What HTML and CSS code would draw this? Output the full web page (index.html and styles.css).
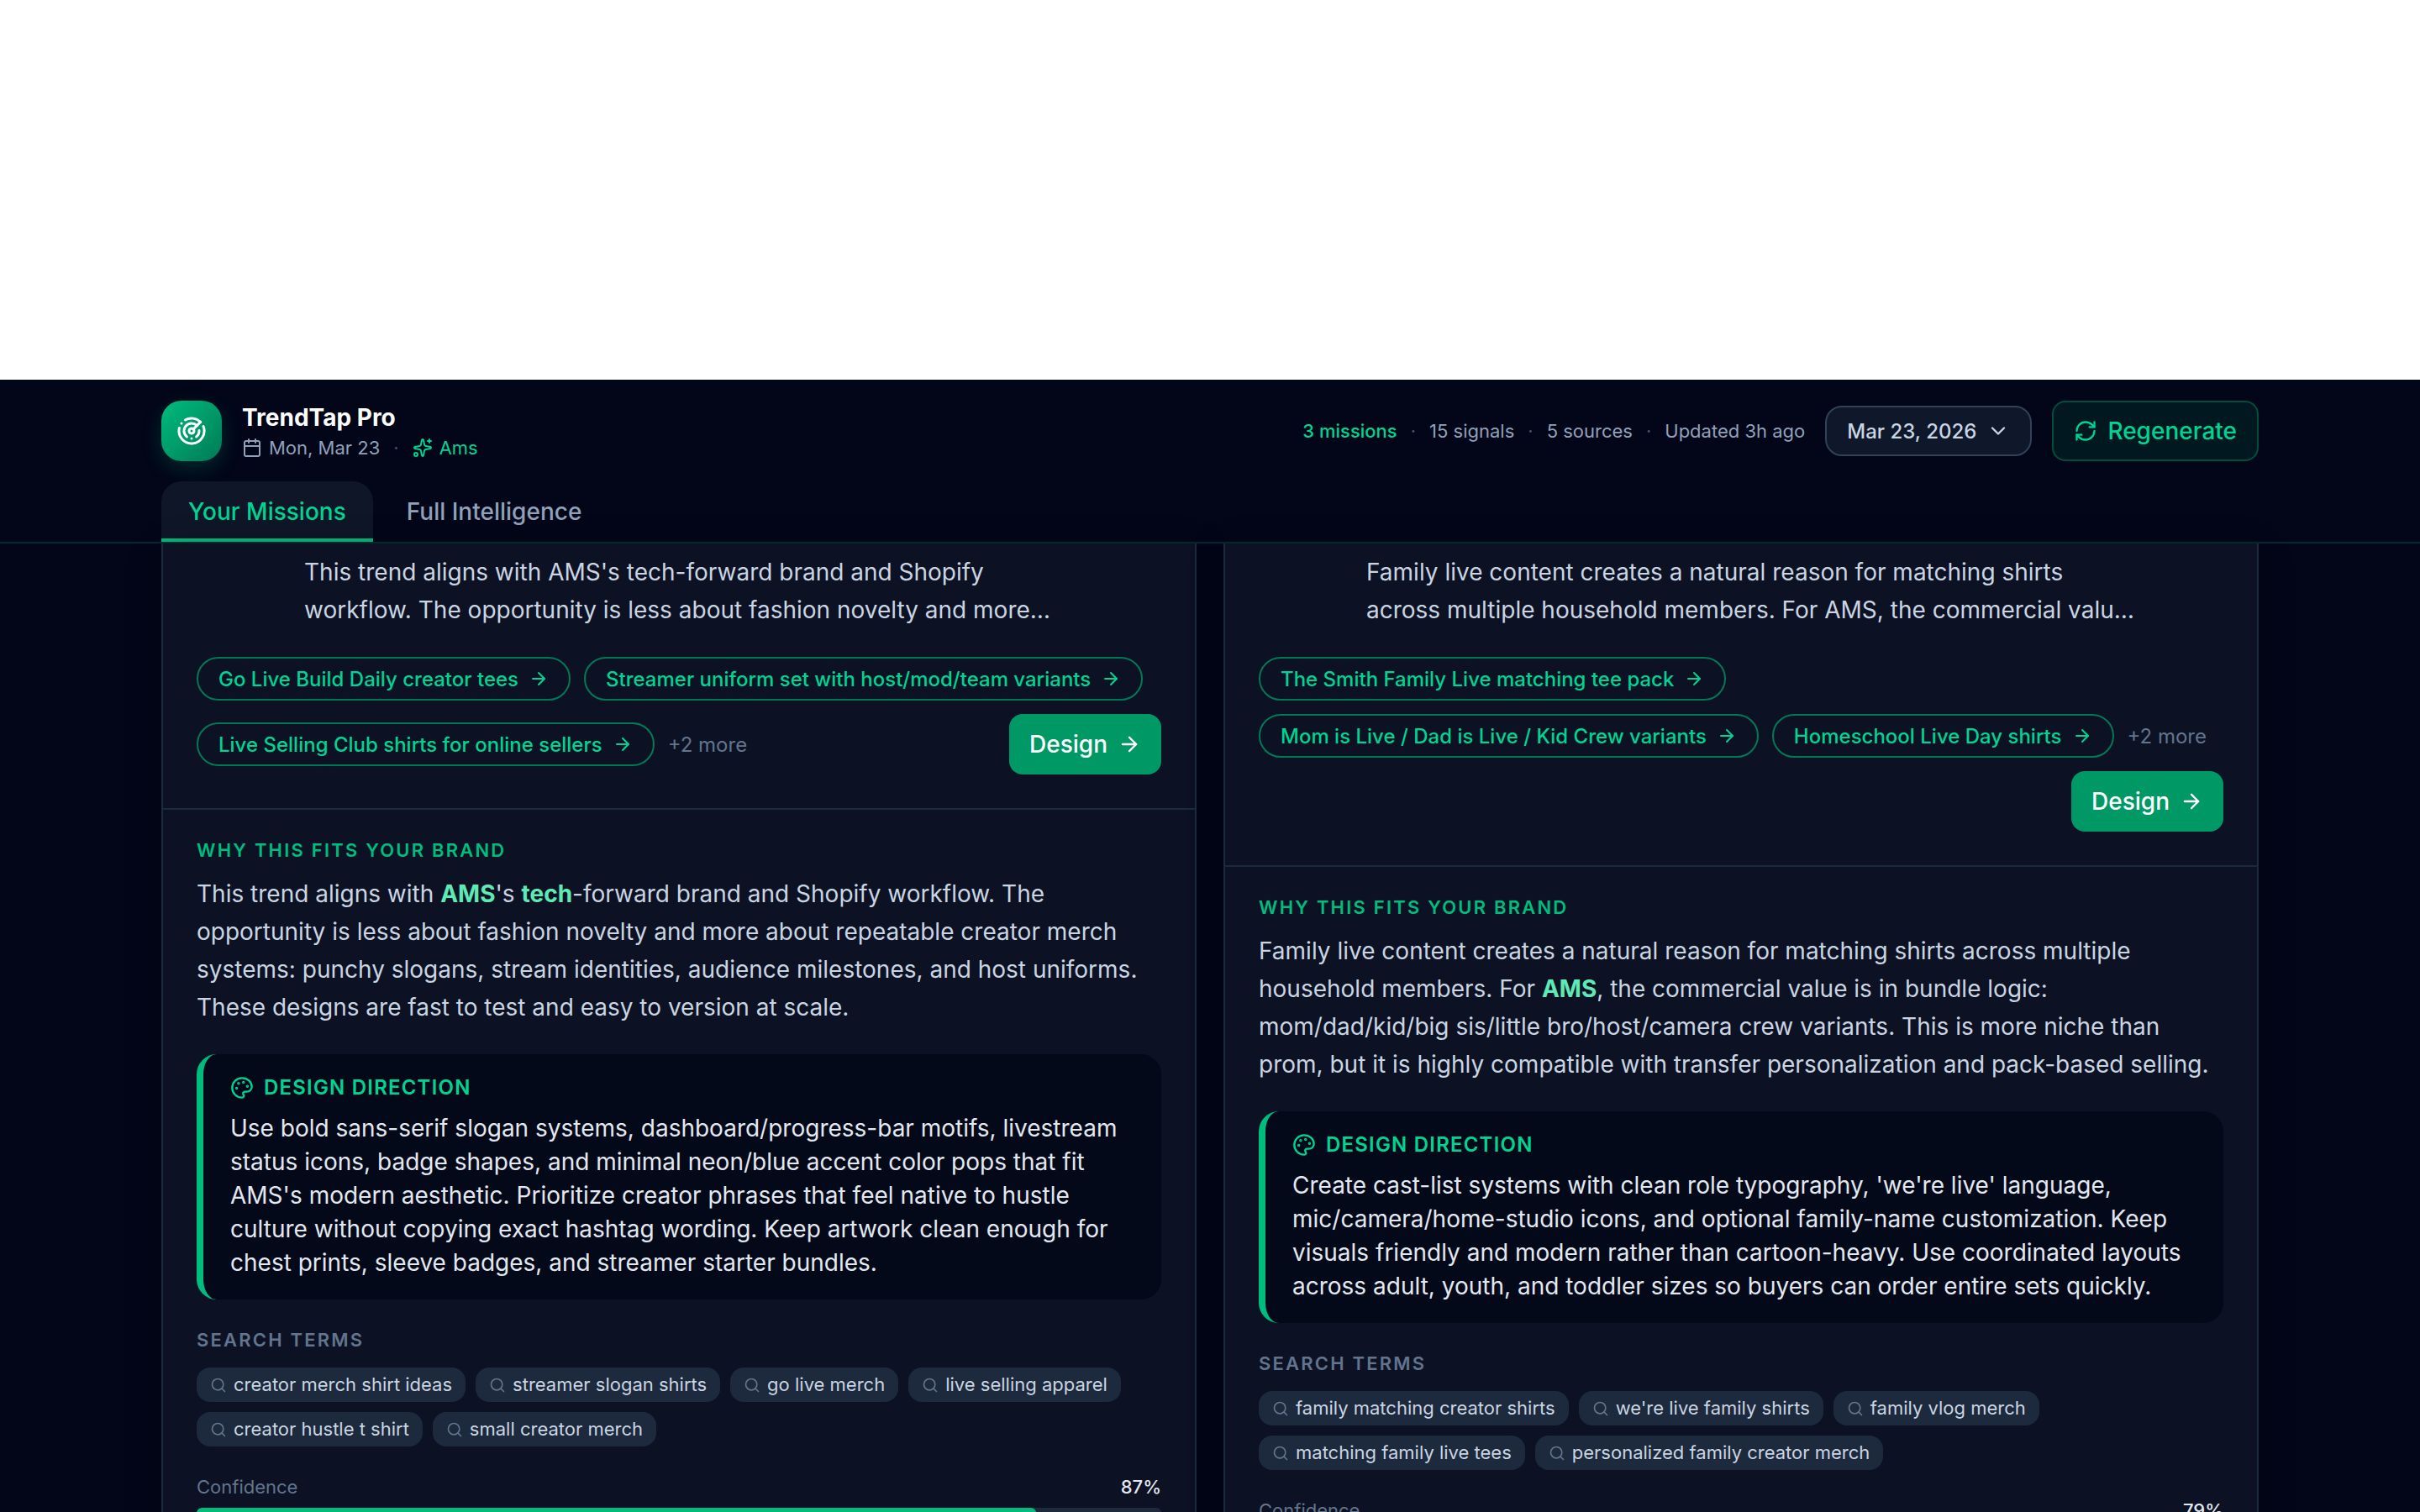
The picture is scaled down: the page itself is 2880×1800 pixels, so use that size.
FILE: index.html
```html
<!DOCTYPE html>
<html lang="en">
<head>
    <meta charset="UTF-8">
    <meta name="viewport" content="width=device-width, initial-scale=1.0">
    <title>TrendTap Pro</title>
    <link rel="stylesheet" href="styles.css">
</head>
<body>
    <svg class="sprite" aria-hidden="true">
        <symbol id="radar" viewBox="0 0 24 24">
            <path d="M19.07 4.93A10 10 0 0 0 6.99 3.34"/>
            <path d="M4 6h.01"/>
            <path d="M2.29 9.62A10 10 0 1 0 21.31 8.35"/>
            <path d="M16.24 7.76A6 6 0 1 0 8.23 16.67"/>
            <path d="M12 18h.01"/>
            <path d="M17.99 11.66A6 6 0 0 1 15.77 16.67"/>
            <circle cx="12" cy="12" r="2"/>
            <path d="m13.41 10.59 5.66-5.66"/>
        </symbol>
        <symbol id="calendar" viewBox="0 0 24 24">
            <path d="M8 2v4"/>
            <path d="M16 2v4"/>
            <rect width="18" height="18" x="3" y="4" rx="2"/>
            <path d="M3 10h18"/>
        </symbol>
        <symbol id="sparkles" viewBox="0 0 24 24">
            <path d="M11.017 2.814a1 1 0 0 1 1.966 0l1.051 5.558a2 2 0 0 0 1.594 1.594l5.558 1.051a1 1 0 0 1 0 1.966l-5.558 1.051a2 2 0 0 0-1.594 1.594l-1.051 5.558a1 1 0 0 1-1.966 0l-1.051-5.558a2 2 0 0 0-1.594-1.594l-5.558-1.051a1 1 0 0 1 0-1.966l5.558-1.051a2 2 0 0 0 1.594-1.594z"/>
            <path d="M20 2v4"/>
            <path d="M22 4h-4"/>
            <circle cx="4" cy="20" r="2"/>
        </symbol>
        <symbol id="chevron" viewBox="0 0 24 24">
            <path d="m6 9 6 6 6-6"/>
        </symbol>
        <symbol id="refresh" viewBox="0 0 24 24">
            <path d="M3 12a9 9 0 0 1 9-9 9.75 9.75 0 0 1 6.74 2.74L21 8"/>
            <path d="M21 3v5h-5"/>
            <path d="M21 12a9 9 0 0 1-9 9 9.75 9.75 0 0 1-6.74-2.74L3 16"/>
            <path d="M8 16H3v5"/>
        </symbol>
        <symbol id="arrow" viewBox="0 0 24 24">
            <path d="M5 12h14"/>
            <path d="m12 5 7 7-7 7"/>
        </symbol>
        <symbol id="palette" viewBox="0 0 24 24">
            <path d="M12 22a1 1 0 0 1 0-20 10 9 0 0 1 10 9 5 5 0 0 1-5 5h-2.25a1.75 1.75 0 0 0-1.4 2.8l.3.4a1.75 1.75 0 0 1-1.4 2.8z"/>
            <circle cx="13.5" cy="6.5" r=".5" fill="currentColor"/>
            <circle cx="17.5" cy="10.5" r=".5" fill="currentColor"/>
            <circle cx="6.5" cy="12.5" r=".5" fill="currentColor"/>
            <circle cx="8.5" cy="7.5" r=".5" fill="currentColor"/>
        </symbol>
        <symbol id="search" viewBox="0 0 24 24">
            <path d="m21 21-4.34-4.34"/>
            <circle cx="11" cy="11" r="8"/>
        </symbol>
    </svg>

    <div class="app">
        <header class="header">
            <div class="container">
                <div class="topbar">
                    <div class="logo"><svg class="icon icon-lg"><use href="#radar"/></svg></div>
                    <div class="brand">
                        <h1>TrendTap Pro</h1>
                        <div class="brand-meta">
                            <span class="meta-item"><svg class="icon"><use href="#calendar"/></svg>Mon, Mar 23</span>
                            <span class="dot">·</span>
                            <span class="meta-item accent"><svg class="icon"><use href="#sparkles"/></svg>Ams</span>
                        </div>
                    </div>
                    <div class="stats">
                        <span class="accent strong">3 missions</span>
                        <span class="dot">·</span>
                        <span>15 signals</span>
                        <span class="dot">·</span>
                        <span>5 sources</span>
                        <span class="dot">·</span>
                        <span>Updated 3h ago</span>
                    </div>
                    <button class="date-button" type="button">Mar 23, 2026 <svg class="icon icon-md"><use href="#chevron"/></svg></button>
                    <button class="regen-button" type="button"><svg class="icon icon-md"><use href="#refresh"/></svg> Regenerate</button>
                </div>
                <nav class="tabs">
                    <button class="tab active" type="button">Your Missions</button>
                    <button class="tab" type="button">Full Intelligence</button>
                </nav>
            </div>
        </header>

        <main class="container missions">
            <article class="card">
                <div class="card-top">
                    <p class="summary">This trend aligns with AMS's tech-forward brand and Shopify workflow. The opportunity is less about fashion novelty and more…</p>
                    <div class="ideas">
                        <button class="idea" type="button">Go Live Build Daily creator tees <svg class="icon"><use href="#arrow"/></svg></button>
                        <button class="idea" type="button">Streamer uniform set with host/mod/team variants <svg class="icon"><use href="#arrow"/></svg></button>
                        <button class="idea" type="button">Live Selling Club shirts for online sellers <svg class="icon"><use href="#arrow"/></svg></button>
                        <span class="more">+2 more</span>
                        <button class="design-button" type="button">Design <svg class="icon icon-md"><use href="#arrow"/></svg></button>
                    </div>
                </div>
                <div class="card-body">
                    <h2 class="label accent-dark">Why this fits your brand</h2>
                    <p class="reason">This trend aligns with <mark>AMS</mark>'s <mark>tech</mark>-forward brand and Shopify workflow. The opportunity is less about fashion novelty and more about repeatable creator merch systems: punchy slogans, stream identities, audience milestones, and host uniforms. These designs are fast to test and easy to version at scale.</p>
                    <section class="direction">
                        <h3><svg class="icon icon-md"><use href="#palette"/></svg>Design direction</h3>
                        <p>Use bold sans-serif slogan systems, dashboard/progress-bar motifs, livestream status icons, badge shapes, and minimal neon/blue accent color pops that fit AMS's modern aesthetic. Prioritize creator phrases that feel native to hustle culture without copying exact hashtag wording. Keep artwork clean enough for chest prints, sleeve badges, and streamer starter bundles.</p>
                    </section>
                    <h2 class="label">Search terms</h2>
                    <ul class="terms">
                        <li><svg class="icon icon-sm"><use href="#search"/></svg>creator merch shirt ideas</li>
                        <li><svg class="icon icon-sm"><use href="#search"/></svg>streamer slogan shirts</li>
                        <li><svg class="icon icon-sm"><use href="#search"/></svg>go live merch</li>
                        <li><svg class="icon icon-sm"><use href="#search"/></svg>live selling apparel</li>
                        <li><svg class="icon icon-sm"><use href="#search"/></svg>creator hustle t shirt</li>
                        <li><svg class="icon icon-sm"><use href="#search"/></svg>small creator merch</li>
                    </ul>
                    <div class="confidence">
                        <span>Confidence</span>
                        <span class="value">87%</span>
                    </div>
                    <div class="bar"><div class="bar-fill" style="width: 87%"></div></div>
                </div>
            </article>

            <article class="card">
                <div class="card-top">
                    <p class="summary">Family live content creates a natural reason for matching shirts across multiple household members. For AMS, the commercial valu…</p>
                    <div class="ideas">
                        <button class="idea" type="button">The Smith Family Live matching tee pack <svg class="icon"><use href="#arrow"/></svg></button>
                        <button class="idea" type="button">Mom is Live / Dad is Live / Kid Crew variants <svg class="icon"><use href="#arrow"/></svg></button>
                        <button class="idea" type="button">Homeschool Live Day shirts <svg class="icon"><use href="#arrow"/></svg></button>
                        <span class="more">+2 more</span>
                        <button class="design-button" type="button">Design <svg class="icon icon-md"><use href="#arrow"/></svg></button>
                    </div>
                </div>
                <div class="card-body">
                    <h2 class="label accent-dark">Why this fits your brand</h2>
                    <p class="reason">Family live content creates a natural reason for matching shirts across multiple household members. For <mark>AMS</mark>, the commercial value is in bundle logic: mom/dad/kid/big sis/little bro/host/camera crew variants. This is more niche than prom, but it is highly compatible with transfer personalization and pack-based selling.</p>
                    <section class="direction">
                        <h3><svg class="icon icon-md"><use href="#palette"/></svg>Design direction</h3>
                        <p>Create cast-list systems with clean role typography, 'we're live' language, mic/camera/home-studio icons, and optional family-name customization. Keep visuals friendly and modern rather than cartoon-heavy. Use coordinated layouts across adult, youth, and toddler sizes so buyers can order entire sets quickly.</p>
                    </section>
                    <h2 class="label">Search terms</h2>
                    <ul class="terms">
                        <li><svg class="icon icon-sm"><use href="#search"/></svg>family matching creator shirts</li>
                        <li><svg class="icon icon-sm"><use href="#search"/></svg>we're live family shirts</li>
                        <li><svg class="icon icon-sm"><use href="#search"/></svg>family vlog merch</li>
                        <li><svg class="icon icon-sm"><use href="#search"/></svg>matching family live tees</li>
                        <li><svg class="icon icon-sm"><use href="#search"/></svg>personalized family creator merch</li>
                    </ul>
                    <div class="confidence">
                        <span>Confidence</span>
                        <span class="value">79%</span>
                    </div>
                    <div class="bar"><div class="bar-fill" style="width: 79%"></div></div>
                </div>
            </article>
        </main>
    </div>
</body>
</html>
```
FILE: styles.css
```css
* {
    box-sizing: border-box;
}
body {
    margin: 0;
    height: 100vh;
    padding-top: 452px;
    overflow: hidden;
    background: #fff;
    font-family: 'Inter', sans-serif;
    font-size: 28px;
    color: #cad5e2;
    -webkit-font-smoothing: antialiased;
}
h1, h2, h3, p, ul {
    margin: 0;
    padding: 0;
}
button {
    display: inline-flex;
    align-items: center;
    border: none;
    background: none;
    font-family: inherit;
    font-weight: 500;
    cursor: pointer;
}
.sprite {
    display: none;
}
.icon {
    width: 24px;
    height: 24px;
    flex-shrink: 0;
    fill: none;
    stroke: currentColor;
    stroke-width: 2;
    stroke-linecap: round;
    stroke-linejoin: round;
}
.icon-sm {
    width: 20px;
    height: 20px;
}
.icon-md {
    width: 28px;
    height: 28px;
}
.icon-lg {
    width: 36px;
    height: 36px;
}
.accent {
    color: #00d492;
}
.strong {
    font-weight: 500;
}
.dot {
    color: #45556c;
}
.app {
    background: #020618;
}
.container {
    max-width: 2560px;
    margin: 0 auto;
    padding: 0 32px;
}

/* header */
.header {
    padding-top: 25px;
    border-bottom: 2px solid #022c2c;
    background: #020618;
}
.topbar {
    display: flex;
    align-items: center;
    gap: 24px;
}
.logo {
    display: flex;
    align-items: center;
    justify-content: center;
    width: 72px;
    height: 72px;
    border-radius: 24px;
    background: linear-gradient(135deg, #00bc7d, #007a55);
    box-shadow: 0 8px 24px rgba(0, 188, 125, 0.2);
    color: #fff;
}
.brand h1 {
    font-size: 28px;
    line-height: 40px;
    font-weight: 700;
    color: #fff;
}
.brand-meta {
    display: flex;
    align-items: center;
    gap: 16px;
    font-size: 22px;
    line-height: 32px;
    color: #90a1b9;
}
.meta-item {
    display: flex;
    align-items: center;
    gap: 8px;
}
.stats {
    display: flex;
    gap: 16px;
    margin-left: auto;
    font-size: 22px;
    line-height: 33px;
    color: #90a1b9;
}
.date-button {
    gap: 12px;
    height: 60px;
    padding: 0 24px;
    border: 2px solid #314158;
    border-radius: 20px;
    background: #0f172b;
    font-size: 24px;
    color: #cad5e2;
}
.regen-button {
    gap: 12px;
    height: 72px;
    padding: 0 24px;
    border: 2px solid #004f3b;
    border-radius: 16px;
    background: #021821;
    font-size: 28px;
    color: #00d492;
}
.tabs {
    display: flex;
    gap: 8px;
    margin-top: 24px;
}
.tab {
    height: 72px;
    padding: 4px 32px 0;
    border-bottom: 4px solid transparent;
    border-radius: 24px 24px 0 0;
    font-size: 28px;
    color: #90a1b9;
}
.tab.active {
    border-image: linear-gradient(#00bc7d, #00bc7d) 0 0 4;
    background: #0e1628;
    color: #00d492;
}

/* mission cards */
.missions {
    display: grid;
    grid-template-columns: 1fr 1fr;
    align-items: start;
    gap: 32px;
}
.card {
    border: 2px solid #1d293d;
    border-top: none;
    border-radius: 0 0 28px 28px;
    background: #0c1224;
    box-shadow: 0 8px 40px rgba(0, 0, 0, 0.3);
}
.card-top {
    padding: 12px 40px 40px;
}
.summary {
    margin-bottom: 33px;
    padding: 0 104px 0 128px;
    line-height: 45px;
}
.ideas {
    display: flex;
    flex-wrap: wrap;
    align-items: center;
    gap: 16px;
}
.idea {
    gap: 12px;
    height: 52px;
    padding: 0 24px;
    border: 2px solid #007a55;
    border-radius: 26px;
    font-size: 24px;
    color: #00d492;
}
.more {
    font-size: 24px;
    color: #62748e;
}
.design-button {
    gap: 12px;
    height: 72px;
    margin-left: auto;
    padding: 0 24px;
    border-radius: 16px;
    background: #009966;
    font-size: 28px;
    color: #fff;
}
.card-body {
    padding: 32px 40px 40px;
    border-top: 2px solid #1d293d;
}
.label {
    font-size: 22px;
    line-height: 33px;
    font-weight: 600;
    letter-spacing: 0.1em;
    text-transform: uppercase;
    color: #62748e;
}
.accent-dark {
    color: #00bc7d;
}
.reason {
    margin: 13px 0 33px;
    line-height: 45px;
}
mark {
    background: none;
    font-weight: 700;
    color: #5ee9b5;
}
.direction {
    margin-bottom: 32px;
    padding: 24px 32px;
    border-left: 8px solid #00bc7d;
    border-radius: 24px;
    background: #040919;
}
.direction h3 {
    display: flex;
    align-items: center;
    gap: 12px;
    margin-bottom: 12px;
    font-size: 24px;
    line-height: 32px;
    font-weight: 600;
    letter-spacing: 0.05em;
    text-transform: uppercase;
    color: #00d492;
}
.direction p {
    line-height: 40px;
    color: #e2e8f0;
}
.terms {
    display: flex;
    flex-wrap: wrap;
    gap: 12px;
    margin: 16px 0 32px;
    list-style: none;
}
.terms li {
    display: flex;
    align-items: center;
    gap: 8px;
    padding: 4px 16px;
    border-radius: 16px;
    background: #1d293d;
    font-size: 22px;
    line-height: 33px;
}
.terms .icon {
    color: #62748e;
}
.confidence {
    display: flex;
    justify-content: space-between;
    margin-bottom: 8px;
    font-size: 22px;
    line-height: 33px;
    color: #62748e;
}
.confidence .value {
    font-weight: 500;
    color: #e2e8f0;
}
.bar {
    height: 12px;
    border-radius: 6px;
    background: #1d293d;
    overflow: hidden;
}
.bar-fill {
    height: 12px;
    border-radius: 6px;
    background: #00bc7d;
}
```
